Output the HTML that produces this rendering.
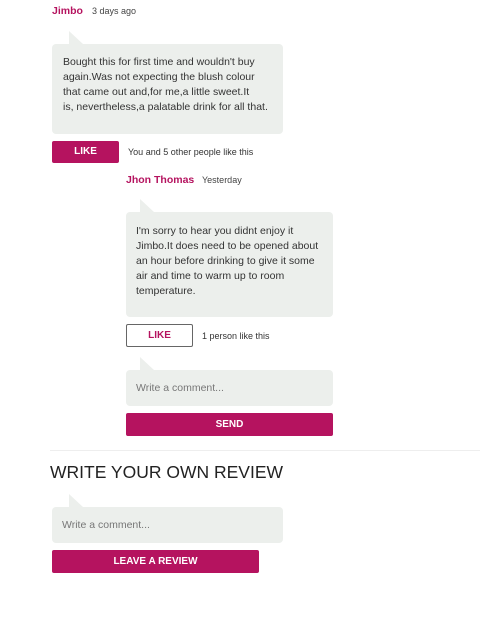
<!DOCTYPE html>
<html><head><style>
*{box-sizing:border-box}
body{margin:0;width:480px;height:622px;background:#fff;font-family:"Liberation Sans",sans-serif;position:relative;overflow:hidden}
.a{position:absolute}
.name{color:#b5135f;font-weight:bold;font-size:10.5px}
.time{color:#444;font-size:9px}
.bub{background:#ecefec;border-radius:4px;color:#333;font-size:10.5px;line-height:15px;white-space:nowrap}
.tail{width:0;height:0;border-left:0 solid transparent;border-right:14px solid transparent;border-bottom:13px solid #ecefec}
.btn{background:#b5135f;color:#fff;font-weight:bold;font-size:10px;text-align:center;border-radius:2px}
.small{font-size:9px;color:#333}
.ph{color:#777;font-size:10.5px}
</style></head><body>
<div class="a name" style="left:52px;top:5px">Jimbo</div>
<div class="a time" style="left:92px;top:6px">3 days ago</div>
<div class="a tail" style="left:69px;top:31px"></div>
<div class="a bub" style="left:52px;top:44px;width:231px;height:90px;padding:11px 0 0 11px">Bought this for first time and wouldn't buy<br>again.Was not expecting the blush colour<br>that came out and,for me,a little sweet.It<br>is, nevertheless,a palatable drink for all that.</div>
<div class="a btn" style="left:52px;top:141px;width:67px;height:22px;line-height:22px">LIKE</div>
<div class="a small" style="left:128px;top:147px">You and 5 other people like this</div>

<div class="a name" style="left:126px;top:174px">Jhon Thomas</div>
<div class="a time" style="left:202px;top:175px">Yesterday</div>
<div class="a tail" style="left:140px;top:199px"></div>
<div class="a bub" style="left:126px;top:212px;width:207px;height:105px;padding:12px 0 0 10px">I'm sorry to hear you didnt enjoy it<br>Jimbo.It does need to be opened about<br>an hour before drinking to give it some<br>air and time to warm up to room<br>temperature.</div>
<div class="a" style="left:126px;top:324px;width:67px;height:23px;border:1px solid #666;border-radius:2px;color:#b5135f;font-weight:bold;font-size:10px;text-align:center;line-height:21px">LIKE</div>
<div class="a small" style="left:202px;top:331px">1 person like this</div>
<div class="a tail" style="left:140px;top:357px"></div>
<div class="a bub" style="left:126px;top:370px;width:207px;height:36px;padding-left:10px;line-height:36px"><span class="ph">Write a comment...</span></div>
<div class="a btn" style="left:126px;top:413px;width:207px;height:23px;line-height:23px">SEND</div>

<div class="a" style="left:50px;top:450px;width:430px;height:1px;background:#eee"></div>
<div class="a" style="left:50px;top:462px;font-size:17.5px;color:#222">WRITE YOUR OWN REVIEW</div>
<div class="a tail" style="left:69px;top:494px"></div>
<div class="a bub" style="left:52px;top:507px;width:231px;height:36px;padding-left:10px;line-height:36px"><span class="ph">Write a comment...</span></div>
<div class="a btn" style="left:52px;top:550px;width:207px;height:23px;line-height:23px">LEAVE A REVIEW</div>
</body></html>
